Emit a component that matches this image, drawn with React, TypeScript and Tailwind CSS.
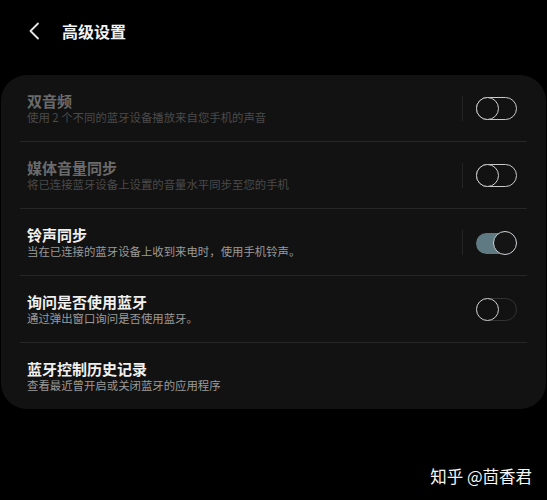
import React from "react";

interface RowData {
  title: string;
  desc: string;
  disabled?: boolean;
  toggle?: "off" | "on" | "offDim" | null;
  divider?: boolean;
}

const rows: RowData[] = [
  { title: "双音频", desc: "使用 2 个不同的蓝牙设备播放来自您手机的声音", disabled: true, toggle: "off", divider: true },
  { title: "媒体音量同步", desc: "将已连接蓝牙设备上设置的音量水平同步至您的手机", disabled: true, toggle: "off", divider: true },
  { title: "铃声同步", desc: "当在已连接的蓝牙设备上收到来电时，使用手机铃声。", toggle: "on", divider: true },
  { title: "询问是否使用蓝牙", desc: "通过弹出窗口询问是否使用蓝牙。", toggle: "offDim" },
  { title: "蓝牙控制历史记录", desc: "查看最近曾开启或关闭蓝牙的应用程序", toggle: null },
];

const Toggle = ({ state }: { state: "off" | "on" | "offDim" }) => {
  if (state === "on") {
    return (
      <div className="relative w-[41px] h-[23px]">
        <div className="absolute left-0 top-[2px] w-[36px] h-[21px] rounded-full bg-[#5f7a82]" />
        <div className="absolute right-0 top-0 w-[24px] h-[24px] rounded-full bg-[#141414] border-[1.5px] border-[#cfd4d6]" />
      </div>
    );
  }
  const track = state === "off" ? "border-[#c9c9c9]" : "border-[#333333]";
  return (
    <div className="relative w-[41px] h-[23px]">
      <div className={`absolute inset-0 rounded-full border-[1.5px] ${track}`} />
      <div className="absolute left-0 top-0 w-[23px] h-[23px] rounded-full bg-[#121212] border-[1.5px] border-[#d0d0d0]" />
    </div>
  );
};

export default function App() {
  return (
    <div
      className="w-[547px] h-[500px] bg-black overflow-hidden"
      style={{ fontFamily: '"Noto Sans CJK SC", "Noto Sans", sans-serif' }}
    >
      <div className="h-[62px] flex items-center pl-[28px]">
        <svg width="13" height="18" viewBox="0 0 13 18" fill="none">
          <polyline points="10,1.5 2.5,9 10,16.5" stroke="#e6e6e6" strokeWidth="1.8" strokeLinecap="round" strokeLinejoin="round" />
        </svg>
        <span className="ml-[21px] text-[16px] leading-[22px] font-semibold text-[#f2f2f2]">高级设置</span>
      </div>

      <div className="mt-[13px] mx-px rounded-[26px] bg-[#121212]">
        {rows.map((row, i) => (
          <div key={i}>
            <div className="h-[66px] flex items-center pl-[26px] pr-[29px]">
              <div className="flex-1 flex flex-col">
                <span
                  className={`text-[15px] leading-[18px] font-semibold ${
                    row.disabled ? "text-[#6b6b6b]" : "text-[#f0f0f0]"
                  }`}
                >
                  {row.title}
                </span>
                <span
                  className={`text-[11.4px] leading-[14px] ${
                    row.disabled ? "text-[#4a4a4a]" : "text-[#9a9a9a]"
                  }`}
                >
                  {row.desc}
                </span>
              </div>
              {row.divider && <div className="w-px h-[25px] bg-[#242424] mr-[13px]" />}
              {row.toggle && <Toggle state={row.toggle} />}
            </div>
            {i < rows.length - 1 && <div className="h-px mx-[19px] bg-[#262626]" />}
          </div>
        ))}
      </div>

      <div className="mt-[55px] flex justify-end pr-[15px]">
        <span className="text-[16.5px] leading-[24px] text-[#f5f5f5]">知乎 @茴香君</span>
      </div>
    </div>
  );
}
